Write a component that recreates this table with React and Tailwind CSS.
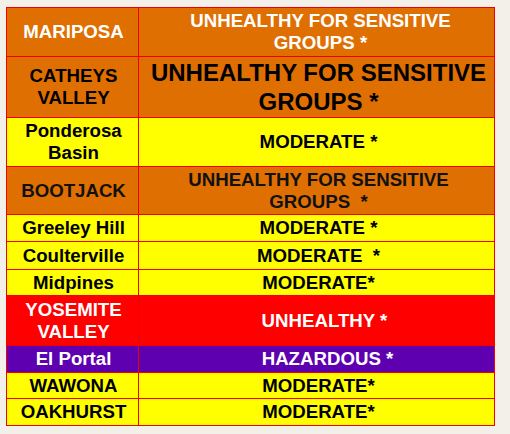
import React from "react";

const ORANGE = "bg-[#e06f02]";
const YELLOW = "bg-[#ffff00]";
const RED = "bg-[#ff0000]";
const PURPLE = "bg-[#5e00b0]";

const rows = [
  { bg: ORANGE, left: ["MARIPOSA"], right: ["UNHEALTHY FOR SENSITIVE", "GROUPS *"], lc: "text-white", rc: "text-white", pr: "pl-[8px]" },
  { bg: ORANGE, left: ["CATHEYS", "VALLEY"], right: ["UNHEALTHY FOR SENSITIVE", "GROUPS *"], lc: "text-black", rc: "text-black", big: true, pr: "pl-[4px]" },
  { bg: YELLOW, left: ["Ponderosa", "Basin"], right: ["MODERATE *"], lc: "text-black", rc: "text-black", pr: "pl-[4px]" },
  { bg: ORANGE, left: ["BOOTJACK"], right: ["UNHEALTHY FOR SENSITIVE", "GROUPS\u00a0 *"], lc: "text-[#111]", rc: "text-[#111]", pr: "pl-[4px]" },
  { bg: YELLOW, left: ["Greeley Hill"], right: ["MODERATE *"], lc: "text-black", rc: "text-black", pr: "pl-[4px]" },
  { bg: YELLOW, left: ["Coulterville"], right: ["MODERATE\u00a0 *"], lc: "text-black", rc: "text-black", pr: "pl-[4px]" },
  { bg: YELLOW, left: ["Midpines"], right: ["MODERATE*"], lc: "text-black", rc: "text-black", pr: "pl-[4px]" },
  { bg: RED, left: ["YOSEMITE", "VALLEY"], right: ["UNHEALTHY *"], lc: "text-white", rc: "text-white", pr: "pl-[16px]" },
  { bg: PURPLE, left: ["El Portal"], right: ["HAZARDOUS *"], lc: "text-white", rc: "text-white", pr: "pl-[22px]" },
  { bg: YELLOW, left: ["WAWONA"], right: ["MODERATE*"], lc: "text-black", rc: "text-black", pr: "pl-[4px]" },
  { bg: YELLOW, left: ["OAKHURST"], right: ["MODERATE*"], lc: "text-black", rc: "text-black", pr: "pl-[4px]" },
];

function Lines({ lines }) {
  return lines.map((l, i) => (
    <div key={i} className="whitespace-pre">
      {l}
    </div>
  ));
}

export default function App() {
  return (
    <div className="w-[510px] h-[434px] bg-[#f2f0e9] pt-[7px] pl-[6px] font-['Liberation_Sans',Arial,sans-serif] font-bold">
      <div className="w-[489px] bg-[#f00000] p-px grid grid-cols-[131px_355px] grid-rows-[48px_60px_48px_47px_26px_27px_25px_49px_26px_25px_26px] gap-px">
        {rows.map((r, i) => (
          <React.Fragment key={i}>
            <div className={`${r.bg} ${r.lc} flex flex-col items-center justify-center text-center text-[18.67px] leading-[22px] pl-[2px]`}>
              <Lines lines={r.left} />
            </div>
            <div
              className={`${r.bg} ${r.rc} ${r.pr} flex flex-col items-center justify-center text-center ${
                r.big ? "text-[24px] leading-[29px]" : "text-[18.67px] leading-[22px]"
              }`}
            >
              <Lines lines={r.right} />
            </div>
          </React.Fragment>
        ))}
      </div>
    </div>
  );
}
